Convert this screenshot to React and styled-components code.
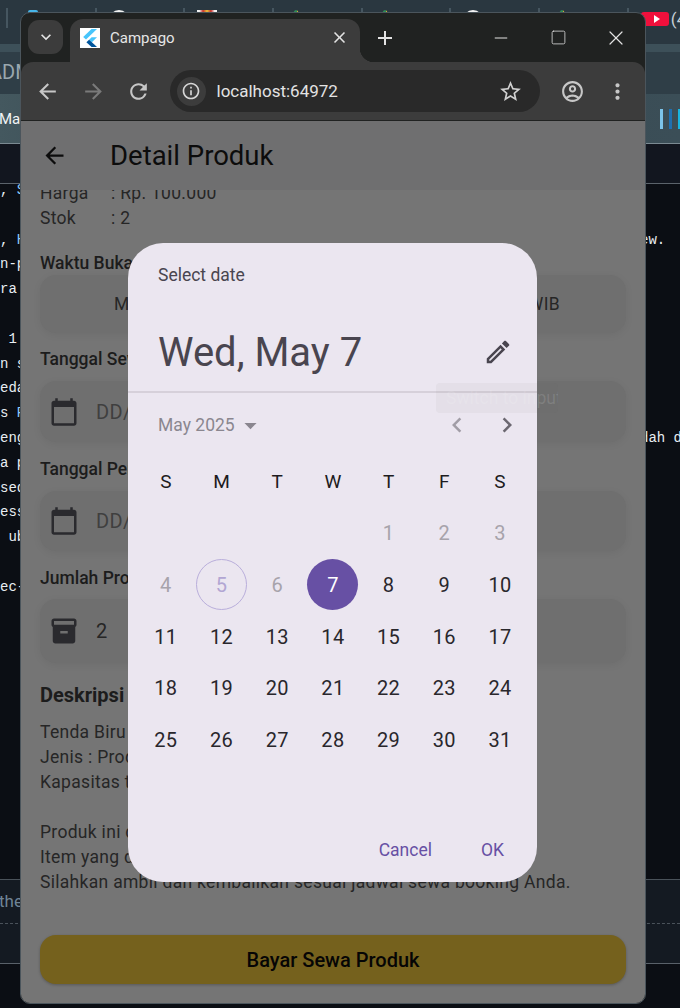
import React from "react";
import styled, { createGlobalStyle } from "styled-components";
import {
  MdAdd,
  MdArrowBack,
  MdArrowDropDown,
  MdArrowForward,
  MdCalendarToday,
  MdChevronLeft,
  MdChevronRight,
  MdClose,
  MdInfoOutline,
  MdInventory2,
  MdKeyboardArrowDown,
  MdMoreVert,
  MdOutlineAccountCircle,
  MdOutlineEdit,
  MdRefresh,
  MdStarBorder,
} from "react-icons/md";
import { Minus, Square, X } from "lucide-react";

const GlobalStyle = createGlobalStyle`
  html, body {
    margin: 0;
    padding: 0;
    background: #0b0e14;
  }
  * {
    box-sizing: border-box;
  }
`;

/* ---------- desktop behind the browser window ---------- */

const Desktop = styled.div`
  position: relative;
  width: 680px;
  height: 1008px;
  overflow: hidden;
  background: #0b0e14;
  font-family: Roboto, sans-serif;
`;

const TopTabs = styled.div`
  display: flex;
  height: 44px;
  padding-left: 6px;
  background: #2a3740;
`;

const PeekTab = styled.div`
  position: relative;
  flex: 0 0 88.7px;
  height: 32px;
  padding: 10px 0 0 14px;
  &::before {
    content: "";
    position: absolute;
    left: 0;
    top: 8px;
    width: 2px;
    height: 20px;
    background: #465660;
  }
`;

const PeekIcon = styled.div`
  width: ${(p) => p.$w || 20}px;
  height: 20px;
  margin-left: ${(p) => p.$offset || 0}px;
  border-radius: ${(p) => p.$radius || "50%"};
  background: ${(p) => p.$color};
`;

const YoutubeIcon = styled.div`
  display: flex;
  align-items: center;
  justify-content: center;
  width: 28px;
  height: 14px;
  margin-top: 2px;
  border-radius: 3px;
  background: #f0103c;
  &::after {
    content: "";
    border-left: 6px solid #fff;
    border-top: 4px solid transparent;
    border-bottom: 4px solid transparent;
    margin-left: 4px;
  }
`;

const PeekCount = styled.span`
  position: absolute;
  left: 44px;
  top: 9px;
  font-size: 17px;
  color: #c8d0d6;
`;

const AccentBar = styled.div`
  height: 8px;
  background: #3d5059;
`;

const AdminBar = styled.div`
  height: 42px;
  padding: 8px 0 0 0;
  background: #2f3e47;
  color: #9aa7ae;
  font-size: 20px;
  line-height: 24px;
  text-indent: -11px;
`;

const MenuBar = styled.div`
  display: flex;
  justify-content: space-between;
  align-items: center;
  height: 50px;
  padding-right: 0;
  background: linear-gradient(90deg, #44585f, #37474f 30%, #3b4e57);
  border-bottom: 1px solid #7b8a92;
  color: #f2f4f5;
  font-size: 15px;
  text-indent: -1px;
`;

const SoundBars = styled.div`
  display: flex;
  align-items: center;
  gap: 6px;
  width: 20px;
  overflow: hidden;
`;

const SoundBar = styled.i`
  flex: 0 0 3px;
  height: 20px;
  background: ${(p) => p.$color};
`;

const EditorHead = styled.div`
  height: 40px;
  background: #12161f;
  border-bottom: 1px solid #5b636b;
`;

const CodeArea = styled.div`
  height: 695px;
  margin-top: -6px;
  margin-bottom: 6px;
  font-family: "Liberation Mono", monospace;
  font-size: 14px;
  line-height: 24.8px;
  color: #e8edf2;
`;

const CodeRow = styled.div`
  display: flex;
  height: 24.8px;
  white-space: pre;
`;

const CodeLeft = styled.span`
  flex: 0 0 640px;
  overflow: hidden;
`;

const CodeRight = styled.span`
  flex: 0 0 40px;
  overflow: hidden;
`;

const Accent = styled.span`
  color: #8cc8ff;
`;

const StatusBand = styled.div`
  height: ${(p) => p.$h}px;
  background: #141a22;
  border-top: 1px ${(p) => p.$line || "solid"} #4a525a;
  color: #6f8496;
  font-size: 17px;
  line-height: 42px;
  text-indent: -1px;
`;

const BandEnd = styled.div`
  border-top: 1px solid #59616a;
`;

/* ---------- browser window ---------- */

const BrowserWindow = styled.div`
  position: absolute;
  left: 20px;
  top: 12px;
  width: 626px;
  height: 992px;
  display: flex;
  flex-direction: column;
  overflow: hidden;
  border: 1px solid #4b555c;
  border-radius: 10px;
  background: #202221;
`;

const TabStrip = styled.div`
  display: flex;
  align-items: flex-end;
  flex: 0 0 49px;
  padding-left: 7px;
  color: #e3e3e3;
`;

const TabSearch = styled.div`
  display: flex;
  align-items: center;
  justify-content: center;
  width: 35px;
  height: 34px;
  margin-bottom: 8px;
  border-radius: 11px;
  background: #3c3c3c;
  font-size: 20px;
`;

const Tab = styled.div`
  position: relative;
  display: flex;
  align-items: center;
  width: 290px;
  height: 43px;
  margin-left: 7px;
  padding: 0 11px 6px 10px;
  border-radius: 13px 13px 0 0;
  background: #3c3c3c;
  &::after {
    content: "";
    position: absolute;
    right: -14px;
    bottom: 0;
    width: 14px;
    height: 14px;
    background: radial-gradient(circle at 100% 0, transparent 14px, #3c3c3c 14.5px);
  }
`;

const Favicon = styled.div`
  display: flex;
  align-items: center;
  justify-content: center;
  width: 20px;
  height: 20px;
  background: #fff;
`;

const TabTitle = styled.span`
  flex: 1;
  margin-left: 10px;
  font-size: 15px;
  color: #e6e6e6;
`;

const PlusSlot = styled.div`
  display: flex;
  align-items: center;
  justify-content: center;
  width: 32px;
  height: 32px;
  margin: 0 0 8px 9px;
  font-size: 24px;
`;

const WindowControls = styled.div`
  display: flex;
  margin-left: auto;
  height: 49px;
`;

const WindowControl = styled.div`
  display: flex;
  align-items: center;
  justify-content: center;
  width: 57.5px;
`;

const Toolbar = styled.div`
  display: flex;
  align-items: center;
  flex: 0 0 58px;
  padding-left: 4px;
  border-radius: 12px 12px 0 0;
  background: #3c3c3c;
`;

const ToolButton = styled.div`
  display: flex;
  align-items: center;
  justify-content: center;
  flex: 0 0 45.5px;
  font-size: 25px;
  color: ${(p) => (p.$off ? "#7a7a7a" : "#c7c7c7")};
`;

const Omnibox = styled.div`
  display: flex;
  align-items: center;
  flex: 0 0 370px;
  height: 42px;
  margin: 0 10px 0 8px;
  padding: 0 17px 0 7px;
  border-radius: 21px;
  background: #292929;
`;

const SiteChip = styled.div`
  display: flex;
  align-items: center;
  justify-content: center;
  width: 29px;
  height: 29px;
  border-radius: 50%;
  background: #3c3c3c;
  color: #d6d6d6;
  font-size: 20px;
`;

const Address = styled.span`
  flex: 1;
  margin-left: 11px;
  font-size: 17px;
  color: #e3e3e3;
`;

const StarIcon = styled(MdStarBorder)`
  font-size: 25px;
  color: #d0d0d0;
`;

/* ---------- flutter page, dimmed by the dialog scrim ---------- */

const Page = styled.div`
  position: relative;
  flex: 1;
  margin-top: 1px;
  overflow: hidden;
  background: #757575;
  color: #262626;
`;

const AppBar = styled.div`
  position: relative;
  z-index: 1;
  display: flex;
  align-items: center;
  height: 69px;
  padding-left: 20px;
  background: #6f6f70;
  color: #0c0c0c;
  font-size: 27.5px;
`;

const BackIcon = styled(MdArrowBack)`
  font-size: 27px;
  margin-right: 42px;
`;

const Content = styled.div`
  display: flex;
  flex-direction: column;
  margin-top: -9px;
  padding: 0 19px 0 19px;
`;

const InfoRow = styled.div`
  display: flex;
  font-size: 17.5px;
  line-height: 25px;
  letter-spacing: 0.3px;
`;

const InfoKey = styled.span`
  flex: 0 0 71px;
`;

const FieldLabel = styled.div`
  margin-top: ${(p) => p.$top}px;
  font-size: 17.5px;
  font-weight: 500;
  line-height: 24px;
  color: #1c1c1c;
`;

const Field = styled.div`
  display: flex;
  align-items: center;
  justify-content: ${(p) => (p.$split ? "space-between" : "flex-start")};
  height: ${(p) => p.$h}px;
  margin-top: ${(p) => p.$top}px;
  padding: ${(p) => (p.$split ? "0 66px 0 74px" : "0 0 0 9px")};
  border-radius: 16px;
  background: #6f6f6f;
  box-shadow: 0 2px 8px rgba(0, 0, 0, 0.06);
  font-size: ${(p) => (p.$split ? 17.5 : 20)}px;
  letter-spacing: 0.35px;
  color: ${(p) => (p.$hint ? "#3f3f3f" : "#262626")};
`;

const FieldIcon = styled.span`
  display: flex;
  margin-right: 17px;
  font-size: 30px;
  color: #2a2a2e;
`;

const SectionTitle = styled.div`
  margin-top: 18px;
  font-size: 20px;
  font-weight: 700;
  line-height: 28px;
  color: #1c1c1c;
`;

const Description = styled.div`
  margin-top: 11px;
  font-size: 17.5px;
  line-height: 25px;
  letter-spacing: 0.3px;
  white-space: pre;
`;

const PayButton = styled.div`
  display: flex;
  align-items: center;
  justify-content: center;
  height: 49px;
  margin-top: 40px;
  border-radius: 16px;
  background: #75611d;
  box-shadow: 0 1px 3px rgba(0, 0, 0, 0.25);
  color: #050505;
  font-size: 20px;
  font-weight: 500;
`;

/* ---------- date picker ---------- */

const Dialog = styled.div`
  position: absolute;
  z-index: 2;
  left: 107px;
  top: 122px;
  display: flex;
  flex-direction: column;
  width: 409px;
  height: 639px;
  padding-top: 20px;
  border-radius: 35px;
  background: #ebe6f0;
  color: #1d1b20;
`;

const DialogLabel = styled.div`
  padding-left: 30px;
  font-size: 17.5px;
  line-height: 24px;
  color: #49454f;
`;

const Headline = styled.div`
  display: flex;
  align-items: center;
  justify-content: space-between;
  height: 60px;
  margin-top: 35px;
  padding: 0 24px 0 30px;
  font-size: 40px;
  color: #49454f;
`;

const EditIcon = styled(MdOutlineEdit)`
  font-size: 30px;
`;

const Divider = styled.div`
  height: 2px;
  margin-top: 9px;
  background: #d6d0da;
`;

const MonthRow = styled.div`
  display: flex;
  align-items: center;
  height: 40px;
  margin-top: 12px;
  padding: 0 5px 0 30px;
  font-size: 17.5px;
  color: #8a868f;
`;

const MonthName = styled.span`
  flex: 1;
  display: flex;
  align-items: center;
`;

const DropIcon = styled(MdArrowDropDown)`
  font-size: 29px;
  margin-left: 1px;
`;

const Chevron = styled.span`
  display: flex;
  justify-content: center;
  width: 50px;
  font-size: 30px;
  color: ${(p) => (p.$dim ? "#a19da6" : "#6b6770")};
`;

const Calendar = styled.div`
  display: grid;
  grid-template-columns: repeat(7, 55.7px);
  grid-auto-rows: 51.6px;
  margin-top: 11px;
  padding-left: 10px;
  font-size: 20px;
`;

const WeekDay = styled.div`
  display: flex;
  align-items: center;
  justify-content: center;
  font-size: 19px;
  color: #1d1b20;
`;

const dayColor = { past: "#a7a3ab", today: "#b2a6d3", selected: "#fff", normal: "#29272c" };

const Day = styled.div`
  display: flex;
  align-items: center;
  justify-content: center;
  width: 51px;
  height: 51px;
  justify-self: center;
  align-self: center;
  border-radius: 50%;
  border: ${(p) => (p.$state === "today" ? "1px solid #b9aedb" : "none")};
  background: ${(p) => (p.$state === "selected" ? "#6750a4" : "transparent")};
  color: ${(p) => dayColor[p.$state]};
  letter-spacing: 0.3px;
`;

const DialogActions = styled.div`
  display: flex;
  justify-content: flex-end;
  gap: 19px;
  margin-top: auto;
  padding: 0 18px 12px 0;
`;

const ActionButton = styled.div`
  display: flex;
  align-items: center;
  height: 40px;
  padding: 0 15px;
  font-size: 17.5px;
  color: #6750a4;
`;

const Tooltip = styled.div`
  position: absolute;
  z-index: 3;
  left: 415px;
  top: 262px;
  width: 122px;
  height: 30px;
  padding-left: 10px;
  border-radius: 4px;
  background: rgba(97, 97, 97, 0.05);
  color: rgba(255, 255, 255, 0.12);
  font-size: 17.5px;
  line-height: 30px;
  white-space: nowrap;
  overflow: hidden;
`;

const FlutterLogo = () => (
  <svg width="16" height="18" viewBox="0 0 16 18">
    <path d="M9.5 0H15L4 10.5 1.2 8z" fill="#47c5fb" />
    <path d="M9.6 8.3H15L9.9 13.2 7.1 10.7z" fill="#47c5fb" />
    <path d="M7.1 10.7l2.8 2.5 5.1 4.8H9.6L4.4 13.3z" fill="#00569e" />
  </svg>
);

const leftCode = [
  ", S", "", ", H", "n-p", "ra", "", " 1", "n s", "eda", "s R", "eng", "a p", "sed", "ess", " ub", "", "ec-",
];

const rightCode = { 2: "ew.", 10: "dah d" };

const days = Array.from({ length: 31 }, (_, i) => i + 1);

const dayState = (d) => {
  if (d === 5) return "today";
  if (d === 7) return "selected";
  return d < 7 ? "past" : "normal";
};

const sheetGreen = "linear-gradient(90deg, #2e8b57 65%, #d9b93a 65%)";

const peeks = [
  { color: "#47b5e8", radius: "2px", w: 10, offset: 8 },
  { color: "#f2f2f2" },
  { color: "linear-gradient(90deg, #f0f0f0 12%, #c9302c 30%, #e8c33a 50%, #c9302c 70%, #f0f0f0 88%)", radius: "0" },
  { color: sheetGreen, w: 8, offset: 6 },
  { color: sheetGreen, w: 8, offset: 6 },
  { color: "#f2f2f2" },
  { color: sheetGreen, w: 8, offset: 6 },
];

export default function App() {
  return (
    <>
      <GlobalStyle />
      <Desktop>
        <TopTabs>
          {peeks.map((p, i) => (
            <PeekTab key={i}>
              <PeekIcon $color={p.color} $radius={p.radius} $w={p.w} $offset={p.offset} />
            </PeekTab>
          ))}
          <PeekTab>
            <YoutubeIcon />
            <PeekCount>(4</PeekCount>
          </PeekTab>
        </TopTabs>
        <AccentBar />
        <AdminBar>ADM</AdminBar>
        <MenuBar>
          <span>Mal</span>
          <SoundBars>
            <SoundBar $color="#7cc4ea" />
            <SoundBar $color="#1f6fb0" />
            <SoundBar $color="#18b4e0" />
          </SoundBars>
        </MenuBar>
        <EditorHead />
        <CodeArea>
          {leftCode.map((text, i) => (
            <CodeRow key={i}>
              <CodeLeft>{text.length === 3 && /[HRS]$/.test(text) ? <>{text.slice(0, 2)}<Accent>{text[2]}</Accent></> : text}</CodeLeft>
              <CodeRight>{rightCode[i]}</CodeRight>
            </CodeRow>
          ))}
        </CodeArea>
        <StatusBand $h={44}>the</StatusBand>
        <StatusBand $h={40} $line="dashed" />
        <BandEnd />

        <BrowserWindow>
          <TabStrip>
            <TabSearch>
              <MdKeyboardArrowDown />
            </TabSearch>
            <Tab>
              <Favicon>
                <FlutterLogo />
              </Favicon>
              <TabTitle>Campago</TabTitle>
              <MdClose size={19} />
            </Tab>
            <PlusSlot>
              <MdAdd />
            </PlusSlot>
            <WindowControls>
              <WindowControl>
                <Minus size={20} strokeWidth={1.2} />
              </WindowControl>
              <WindowControl>
                <Square size={17} strokeWidth={1.1} />
              </WindowControl>
              <WindowControl>
                <X size={24} strokeWidth={1.2} />
              </WindowControl>
            </WindowControls>
          </TabStrip>
          <Toolbar>
            <ToolButton>
              <MdArrowBack />
            </ToolButton>
            <ToolButton $off>
              <MdArrowForward />
            </ToolButton>
            <ToolButton>
              <MdRefresh />
            </ToolButton>
            <Omnibox>
              <SiteChip>
                <MdInfoOutline />
              </SiteChip>
              <Address>localhost:64972</Address>
              <StarIcon />
            </Omnibox>
            <ToolButton>
              <MdOutlineAccountCircle />
            </ToolButton>
            <ToolButton>
              <MdMoreVert />
            </ToolButton>
          </Toolbar>

          <Page>
            <AppBar>
              <BackIcon />
              Detail Produk
            </AppBar>
            <Content>
              <InfoRow>
                <InfoKey>Harga</InfoKey>: Rp. 100.000
              </InfoRow>
              <InfoRow>
                <InfoKey>Stok</InfoKey>: 2
              </InfoRow>
              <FieldLabel $top={20}>Waktu Buka</FieldLabel>
              <Field $split $h={58} $top={0}>
                <span>Mulai</span>
                <span>17.00 WIB</span>
              </Field>
              <FieldLabel $top={14}>Tanggal Sewa</FieldLabel>
              <Field $hint $h={61} $top={10}>
                <FieldIcon>
                  <MdCalendarToday />
                </FieldIcon>
                DD/MM/YYYY
              </Field>
              <FieldLabel $top={15}>Tanggal Pengembalian</FieldLabel>
              <Field $hint $h={60} $top={10}>
                <FieldIcon>
                  <MdCalendarToday />
                </FieldIcon>
                DD/MM/YYYY
              </Field>
              <FieldLabel $top={15}>Jumlah Produk</FieldLabel>
              <Field $h={64} $top={9}>
                <FieldIcon>
                  <MdInventory2 />
                </FieldIcon>
                2
              </Field>
              <SectionTitle>Deskripsi Produk</SectionTitle>
              <Description>
                {"Tenda Biru\nJenis : Produk\nKapasitas tenda : 4 orang\n\nProduk ini dapat disewa.\nItem yang disewa wajib dijaga.\nSilahkan ambil dan kembalikan sesuai jadwal sewa booking Anda."}
              </Description>
              <PayButton>Bayar Sewa Produk</PayButton>
            </Content>

            <Dialog>
              <DialogLabel>Select date</DialogLabel>
              <Headline>
                Wed, May 7
                <EditIcon />
              </Headline>
              <Divider />
              <MonthRow>
                <MonthName>
                  May 2025
                  <DropIcon />
                </MonthName>
                <Chevron $dim>
                  <MdChevronLeft />
                </Chevron>
                <Chevron>
                  <MdChevronRight />
                </Chevron>
              </MonthRow>
              <Calendar>
                {["S", "M", "T", "W", "T", "F", "S"].map((d, i) => (
                  <WeekDay key={i}>{d}</WeekDay>
                ))}
                {[0, 1, 2, 3].map((i) => (
                  <span key={i} />
                ))}
                {days.map((d) => (
                  <Day key={d} $state={dayState(d)}>
                    {d}
                  </Day>
                ))}
              </Calendar>
              <DialogActions>
                <ActionButton>Cancel</ActionButton>
                <ActionButton>OK</ActionButton>
              </DialogActions>
            </Dialog>
            <Tooltip>Switch to input</Tooltip>
          </Page>
        </BrowserWindow>
      </Desktop>
    </>
  );
}
